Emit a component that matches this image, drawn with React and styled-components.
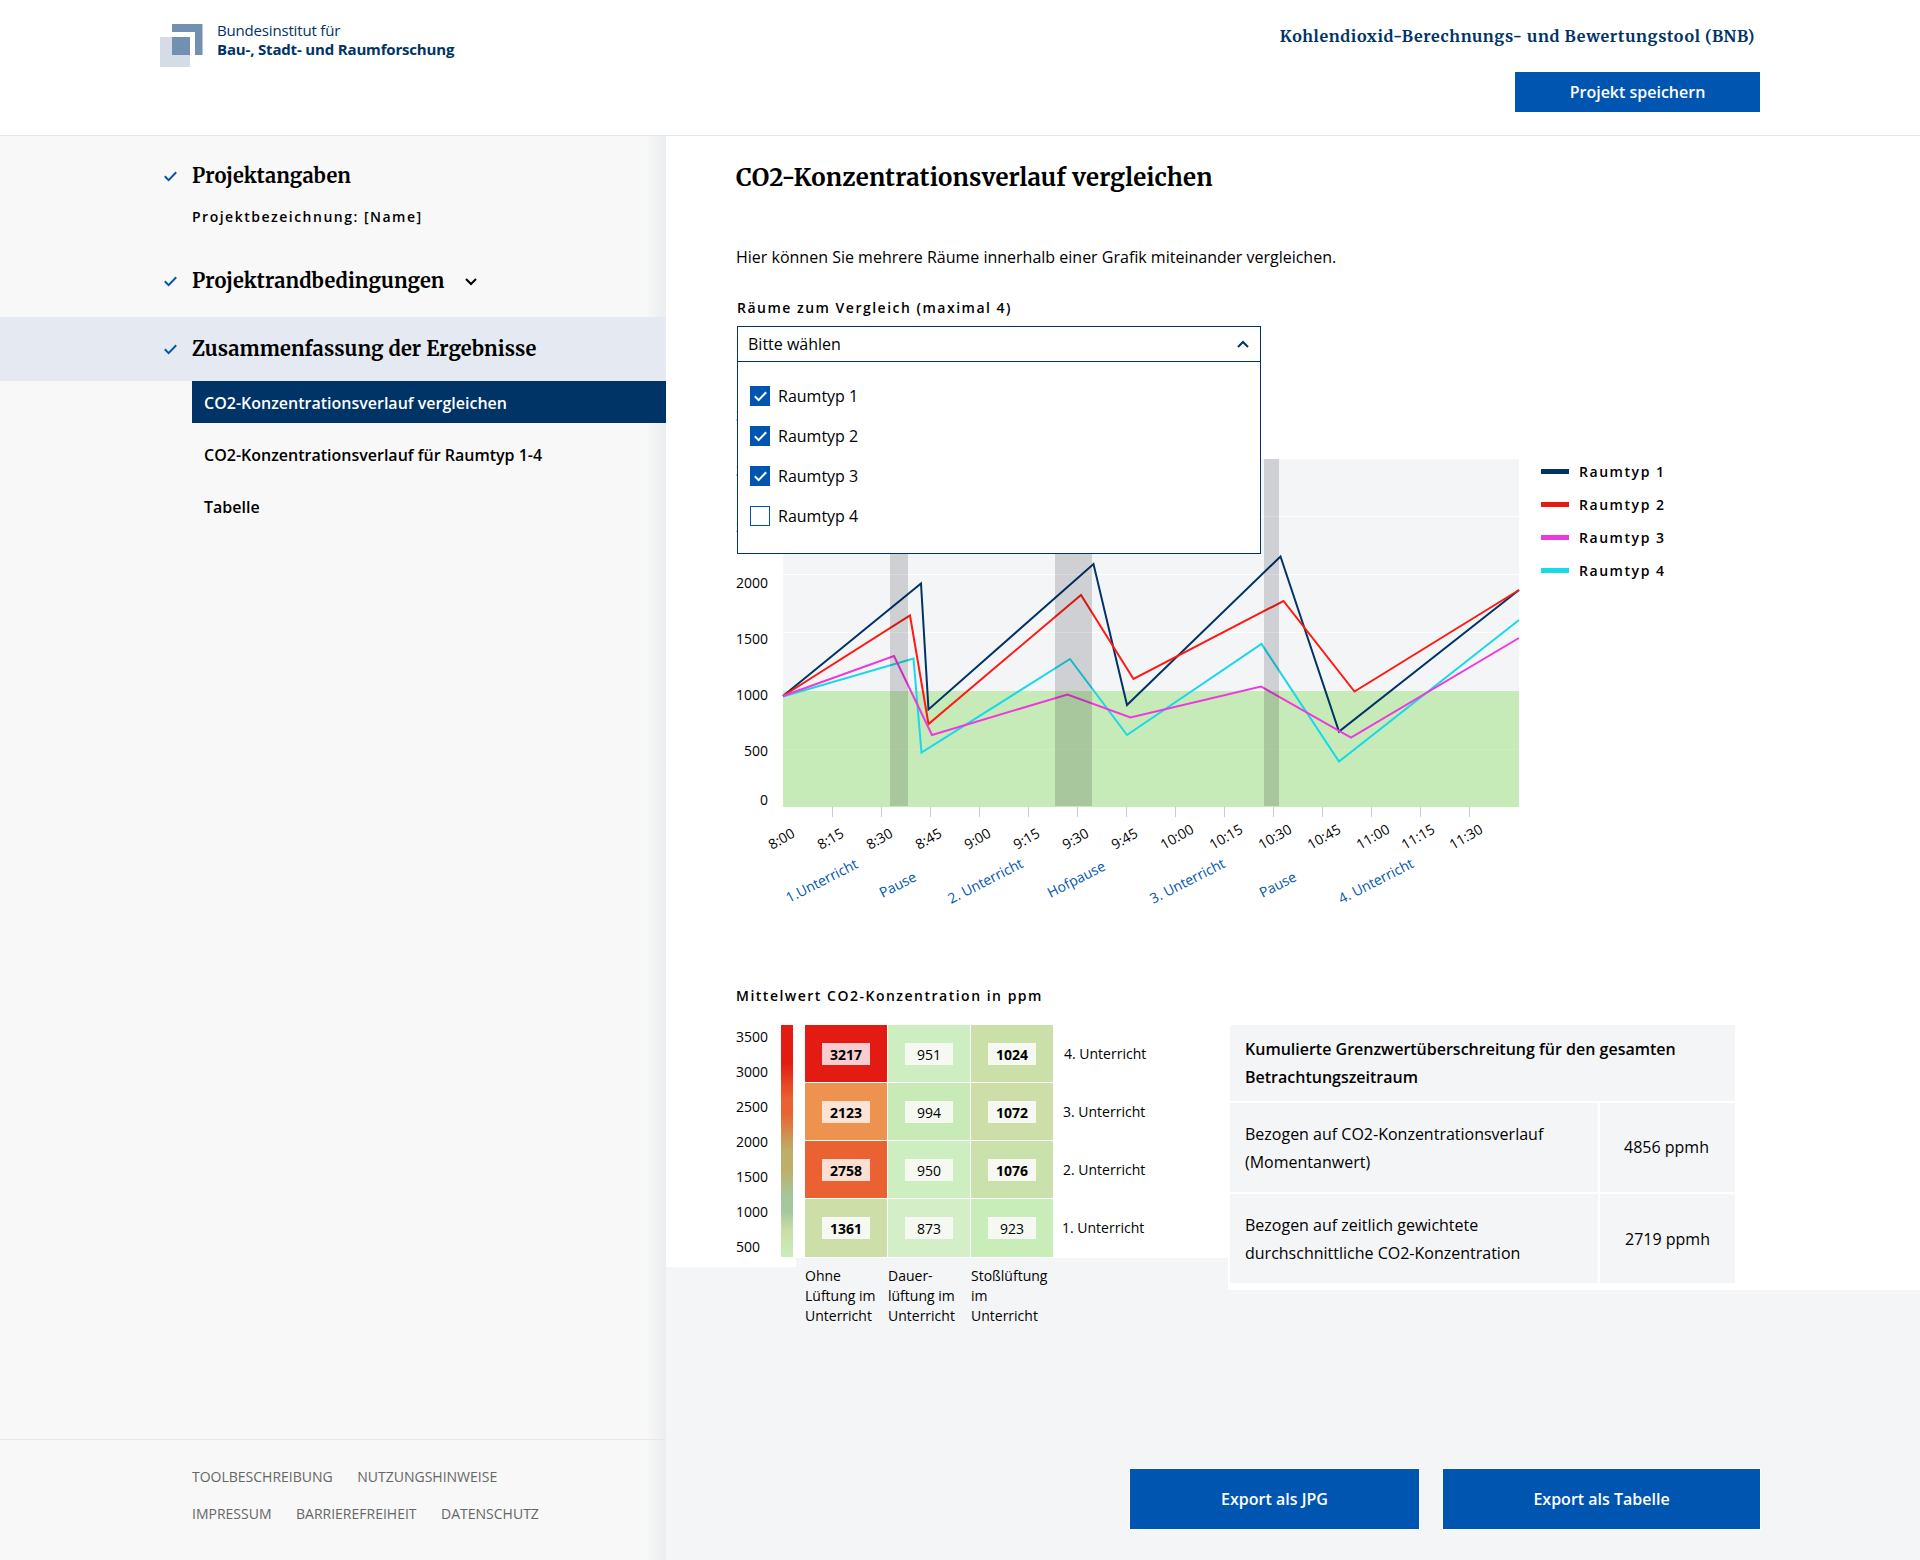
import React from "react"
import styled, { createGlobalStyle, css } from "styled-components"

const navy = "#003366"
const blue = "#0055b0"
const lightGrey = "#f4f5f7"

const GlobalStyle = createGlobalStyle`
  * {
    box-sizing: border-box;
  }
  body {
    margin: 0;
    background: #fff;
    color: #000;
    font-family: "Open Sans", "Noto Sans", sans-serif;
    font-size: 16px;
  }
`

const serif = css`
  font-family: "Merriweather", "DejaVu Serif Condensed", "DejaVu Serif", serif;
  font-weight: bold;
`

const Page = styled.div`
  display: flex;
  flex-direction: column;
  width: 1920px;
  height: 1560px;
  overflow: hidden;
`

/* header */
const Header = styled.header`
  display: flex;
  justify-content: space-between;
  height: 136px;
  padding: 20px 160px 0;
  border-bottom: 1px solid #e3e7ee;
`

const Brand = styled.div`
  display: flex;
  gap: 14px;

  svg {
    margin-top: 4px;
  }
`

const BrandText = styled.div`
  margin-top: 1px;
  color: ${navy};
  font-size: 15px;
  line-height: 19px;
  letter-spacing: -0.17px;
  white-space: nowrap;
`

const BrandLine = styled.div`
  font-weight: ${p => (p.$bold ? 700 : 400)};
`

const HeaderRight = styled.div`
  display: flex;
  flex-direction: column;
  align-items: flex-end;
`

const ToolName = styled.div`
  ${serif}
  margin: 4px 5px 0 0;
  height: 48px;
  color: ${navy};
  font-size: 16px;
  line-height: 24px;
  letter-spacing: 0.69px;
  white-space: nowrap;
`

const Button = styled.button`
  width: ${p => p.$width}px;
  height: ${p => p.$height || 40}px;
  padding: 0;
  border: 0;
  background: ${blue};
  color: #fff;
  font-family: inherit;
  font-size: 16px;
  font-weight: 600;
`

/* sidebar */
const Body = styled.div`
  display: flex;
  flex: 1;
`

const Sidebar = styled.aside`
  display: flex;
  flex-direction: column;
  width: 666px;
  padding-top: 26px;
  background: linear-gradient(to left, #ebedef, #edeff1 5px, #f8f8f8 20px);
`

const NavHead = styled.div`
  ${serif}
  display: flex;
  align-items: center;
  height: ${p => (p.$active ? 64 : 28)}px;
  margin-bottom: ${p => p.$gap || 0}px;
  padding: 0 0 1px 164px;
  background: ${p => (p.$active ? "#e5eaf2" : "transparent")};
  font-size: 20px;
  letter-spacing: 0.12px;
  white-space: nowrap;

  .check {
    margin: 2px 15px 0 0;
  }
  .chevron {
    margin: 1px 0 0 21px;
  }
`

const NavInfo = styled.div`
  margin: 0 0 40px 192px;
  font-size: 14px;
  font-weight: 600;
  line-height: 20px;
  letter-spacing: 1.5px;
`

const SubItem = styled.div`
  height: 42px;
  margin: 0 0 10px 192px;
  padding-left: 12px;
  background: ${p => (p.$active ? navy : "transparent")};
  color: ${p => (p.$active ? "#fff" : "#000")};
  font-weight: 600;
  line-height: 45px;
`

const Footer = styled.footer`
  height: 121px;
  margin-top: auto;
  padding: 27px 0 0 192px;
  border-top: 1px solid #e8e8e8;
  color: #666;
  font-size: 14px;
`

const FooterRow = styled.div`
  display: flex;
  gap: 24.5px;
  height: 37px;
  line-height: 20px;
`

/* main column */
const Main = styled.main`
  display: flex;
  flex: 1;
  flex-direction: column;
  background: ${lightGrey};
`

const Compare = styled.section`
  height: 870px;
  padding: 26px 160px 0 70px;
  background: #fff;
`

const Title = styled.h1`
  ${serif}
  margin: 0 0 51px;
  font-size: 24px;
  line-height: 32px;
  letter-spacing: 0.22px;
  white-space: nowrap;
`

const Intro = styled.p`
  margin: 0 0 29px;
  line-height: 24px;
`

const Label = styled.div`
  padding-left: ${p => p.$inset || 0}px;
  font-size: 14px;
  font-weight: 600;
  line-height: 20px;
  letter-spacing: 1.5px;
`

const Select = styled.div`
  position: relative;
  display: flex;
  align-items: center;
  justify-content: space-between;
  width: 524px;
  height: 36px;
  margin: 8px 0 38px 1px;
  padding: 0 11px 0 10px;
  border: 1px solid ${navy};
`

const Menu = styled.div`
  position: absolute;
  top: 34px;
  left: -1px;
  width: 524px;
  height: 193px;
  padding: 14px 12px;
  border: 1px solid ${navy};
  background: #fff;
`

const Option = styled.div`
  display: flex;
  align-items: center;
  gap: 8px;
  height: 40px;
`

const Checkbox = styled.span`
  display: flex;
  align-items: center;
  justify-content: center;
  width: 20px;
  height: 20px;
  border: 1px solid ${blue};
  background: ${p => (p.$checked ? blue : "#fff")};
`

const ChartRow = styled.div`
  display: flex;
  height: 530px;
  margin-bottom: 56px;

  text {
    font-size: 14px;
  }
`

const Legend = styled.div`
  padding: 55px 0 0 21px;
`

const LegendItem = styled.div`
  display: flex;
  align-items: center;
  gap: 10px;
  height: 33px;
  font-size: 14px;
  font-weight: 600;
  letter-spacing: 1.55px;

  &:before {
    content: "";
    width: 28px;
    height: 5px;
    background: ${p => p.$color};
  }
`

/* averages and limits */
const Results = styled.section`
  display: flex;
  align-items: flex-start;
  font-size: 14px;
`

const Scale = styled.div`
  display: flex;
  justify-content: space-between;
  width: 130px;
  height: 261px;
  padding: 19px 3px 0 70px;
  background: #fff;
  line-height: 35px;
`

const ScaleLabels = styled.div`
  margin-top: -6px;
`

const ScaleBar = styled.div`
  width: 12px;
  height: 232px;
  background: linear-gradient(
    #e31b12 0 16%,
    #ea6231 32%,
    #ea6231 38%,
    #bdae68 54%,
    #bdae68 62%,
    #a5c79b 74%,
    #a5c79b 80%,
    #cbdfa8 89%,
    #c8eebb
  );
`

const Heat = styled.div`
  width: 432px;
  height: 252px;
  padding: 19px 0 0 9px;
  background: #fff;
`

const HeatGrid = styled.div`
  display: grid;
  grid-template-columns: 82px 82px 82px 94px;
  grid-template-rows: 57px 57px 57px 58px;
  gap: 1px;
`

const HeatCell = styled.div`
  display: flex;
  align-items: center;
  justify-content: center;
  background: ${p => p.$color};
`

const Chip = styled.span`
  width: 48px;
  height: 22px;
  background: ${p => p.$color || "#f5f9f1"};
  font-weight: ${p => (p.$bold ? 700 : 400)};
  line-height: 23px;
  text-align: center;
`

const RowLabel = styled.div`
  padding-left: ${p => p.$indent}px;
  line-height: 57px;
  white-space: nowrap;
`

const ColumnLabel = styled.div`
  padding-top: 8px;
  line-height: 20px;
  white-space: pre;
`

const Limits = styled.div`
  flex: 1;
  height: 284px;
  padding: 19px 0 0 2px;
  background: #fff;
`

const LimitGrid = styled.div`
  display: grid;
  grid-template-columns: 368px 135px;
  grid-template-rows: 76px 89px 89px;
  gap: 2px;
  font-size: 16px;
  line-height: 28px;
`

const LimitCell = styled.div`
  display: flex;
  align-items: center;
  grid-column: ${p => (p.$head ? "1 / 3" : "auto")};
  justify-content: ${p => (p.$value ? "center" : "flex-start")};
  padding: ${p => (p.$value ? "0 2px 2px 0" : "0 15px")};
  background: ${lightGrey};
  font-weight: ${p => (p.$head ? 600 : 400)};
  white-space: pre;

  &:last-child {
    padding: 0;
  }
`

const Actions = styled.div`
  display: flex;
  justify-content: flex-end;
  gap: 24px;
  margin-top: auto;
  padding: 0 160px 31px 0;

  button {
    box-shadow: 0 0 0 1px #fff;
  }
`

const rooms = [
  {
    name: "Raumtyp 4",
    color: "#18d8e9",
    points:
      "0,237.5 130.5,199.5 138.5,293.5 287,200 344,276 478.5,185 556,302.5 736,161"
  },
  {
    name: "Raumtyp 1",
    color: navy,
    points:
      "0,237 138,124.5 145.5,250.5 310.5,105 344,246 497.5,97.5 556,272.5 736,131"
  },
  {
    name: "Raumtyp 2",
    color: "#ff1912",
    points:
      "0,237 127,156.5 145.5,265 298,136 350.5,220 500.5,142 571.5,232.5 736,131"
  },
  {
    name: "Raumtyp 3",
    color: "#ee39dc",
    points:
      "0,237 111,197 149,276 284.5,235.5 347.5,258.5 478,227.5 568,278.5 736,179"
  }
]

const legend = [
  ["Raumtyp 1", navy],
  ["Raumtyp 2", "#e8190f"],
  ["Raumtyp 3", "#ee39dc"],
  ["Raumtyp 4", "#18d8e9"]
]

const yLabels = [
  ["3500", -38],
  ["3000", 17],
  ["2500", 73],
  ["2000", 129],
  ["1500", 185],
  ["1000", 241],
  ["500", 297],
  ["0", 346]
]

const times = [
  ["8:00", -11],
  ["8:15", 38],
  ["8:30", 87],
  ["8:45", 136],
  ["9:00", 185],
  ["9:15", 234],
  ["9:30", 283],
  ["9:45", 332],
  ["10:00", 381],
  ["10:15", 430],
  ["10:30", 479],
  ["10:45", 528],
  ["11:00", 577],
  ["11:15", 622],
  ["11:30", 670]
]

const lessons = [
  ["1.Unterricht", 6, 444],
  ["Pause", 99.5, 439],
  ["2. Unterricht", 168, 445],
  ["Hofpause", 267.5, 439],
  ["3. Unterricht", 370, 445],
  ["Pause", 479.5, 439],
  ["4. Unterricht", 558.5, 445]
]

const breaks = [
  [107, 18],
  [272, 37],
  [481, 15]
]

const heat = [
  ["4. Unterricht", 10, ["3217", "#e31b12", "#f9cdd0"], ["951", "#cdeec0"], ["1024", "#cbdfa8"]],
  ["3. Unterricht", 9, ["2123", "#ee924f", "#fbe3d6"], ["994", "#c7eab6"], ["1072", "#cddea8"]],
  ["2. Unterricht", 9, ["2758", "#ea6231", "#fbdfd3"], ["950", "#cdeec0"], ["1076", "#cbe1ac"]],
  ["1. Unterricht", 8, ["1361", "#cddea8"], ["873", "#d4efc8"], ["923", "#c9edb9"]]
]

const Logo = () => (
  <svg width="43" height="43" viewBox="0 0 43 43">
    <path d="M0 13h30v30H0z" fill="#d5dce5" />
    <path d="M12 13h18v18H12zM12 0h30.5v31H35V8H12z" fill="#7291b1" />
  </svg>
)

const Check = ({ color = blue, className }) => (
  <svg className={className} width="13" height="11" viewBox="0 0 13 11">
    <path d="M0.8 5.2l3.8 3.9L12.2 1.2" fill="none" stroke={color} strokeWidth="2" />
  </svg>
)

const Chevron = ({ up, color = "#000", className }) => (
  <svg className={className} width="12" height="9" viewBox="0 0 12 9">
    <path
      d={up ? "M1 7l5-5 5 5" : "M1 2l5 5 5-5"}
      fill="none"
      stroke={color}
      strokeWidth="2"
    />
  </svg>
)

const Chart = () => (
  <svg width="784" height="530" viewBox="-47 -59 784 530">
    <rect width="736" height="348" fill={lightGrey} />
    {[57, 115, 173].map(y => (
      <rect key={y} y={y} width="736" height="1" fill="#fff" />
    ))}
    <rect y="232" width="736" height="116" fill="#c6eab8" />
    <rect y="290" width="736" height="1" fill="#cdecc0" />
    {rooms.map(room => (
      <polyline
        key={room.name}
        points={room.points}
        fill="none"
        stroke={room.color}
        strokeWidth="2"
      />
    ))}
    {breaks.map(([x, width]) => (
      <rect key={x} x={x} width={width} height="347" fill="#000008" opacity="0.15" />
    ))}
    {yLabels.map(([label, y]) => (
      <text key={label} x="-15" y={y} textAnchor="end">
        {label}
      </text>
    ))}
    {times.slice(1).map(([label], i) => (
      <rect key={label} x={49 * (i + 1)} y="348" width="1" height="10" fill="#cbcbd0" />
    ))}
    {times.map(([label, x]) => (
      <text key={label} transform={`translate(${x} 391) rotate(-30)`}>
        {label}
      </text>
    ))}
    {lessons.map(([label, x, y]) => (
      <text key={x} transform={`translate(${x} ${y}) rotate(-27)`} fill={blue}>
        {label}
      </text>
    ))}
  </svg>
)

const RoomSelect = () => (
  <Select>
    <span>Bitte wählen</span>
    <Chevron up color={navy} />
    <Menu>
      {[1, 2, 3, 4].map(n => (
        <Option key={n}>
          <Checkbox $checked={n < 4}>{n < 4 && <Check color="#fff" />}</Checkbox>
          Raumtyp {n}
        </Option>
      ))}
    </Menu>
  </Select>
)

const HeatMap = () => (
  <Heat>
    <HeatGrid>
      {heat.map(([lesson, indent, ...cells]) => (
        <React.Fragment key={lesson}>
          {cells.map(([value, color, chip]) => (
            <HeatCell key={value} $color={color}>
              <Chip $color={chip} $bold={Number(value) > 1000}>
                {value}
              </Chip>
            </HeatCell>
          ))}
          <RowLabel $indent={indent}>{lesson}</RowLabel>
        </React.Fragment>
      ))}
      <ColumnLabel>{"Ohne\nLüftung im\nUnterricht"}</ColumnLabel>
      <ColumnLabel>{"Dauer-\nlüftung im\nUnterricht"}</ColumnLabel>
      <ColumnLabel>{"Stoßlüftung\nim\nUnterricht"}</ColumnLabel>
    </HeatGrid>
  </Heat>
)

const App = () => (
  <Page>
    <GlobalStyle />
    <Header>
      <Brand>
        <Logo />
        <BrandText>
          <BrandLine>Bundesinstitut für</BrandLine>
          <BrandLine $bold>Bau-, Stadt- und Raumforschung</BrandLine>
        </BrandText>
      </Brand>
      <HeaderRight>
        <ToolName>Kohlendioxid-Berechnungs- und Bewertungstool (BNB)</ToolName>
        <Button $width={245}>Projekt speichern</Button>
      </HeaderRight>
    </Header>
    <Body>
      <Sidebar>
        <NavHead $gap={17}>
          <Check className="check" />
          Projektangaben
        </NavHead>
        <NavInfo>Projektbezeichnung: [Name]</NavInfo>
        <NavHead $gap={22}>
          <Check className="check" />
          Projektrandbedingungen
          <Chevron className="chevron" />
        </NavHead>
        <NavHead $active>
          <Check className="check" />
          Zusammenfassung der Ergebnisse
        </NavHead>
        <SubItem $active>CO2-Konzentrationsverlauf vergleichen</SubItem>
        <SubItem>CO2-Konzentrationsverlauf für Raumtyp 1-4</SubItem>
        <SubItem>Tabelle</SubItem>
        <Footer>
          <FooterRow>
            <span>TOOLBESCHREIBUNG</span>
            <span>NUTZUNGSHINWEISE</span>
          </FooterRow>
          <FooterRow>
            <span>IMPRESSUM</span>
            <span>BARRIEREFREIHEIT</span>
            <span>DATENSCHUTZ</span>
          </FooterRow>
        </Footer>
      </Sidebar>
      <Main>
        <Compare>
          <Title>CO2-Konzentrationsverlauf vergleichen</Title>
          <Intro>
            Hier können Sie mehrere Räume innerhalb einer Grafik miteinander vergleichen.
          </Intro>
          <Label $inset={1}>Räume zum Vergleich (maximal 4)</Label>
          <RoomSelect />
          <ChartRow>
            <Chart />
            <Legend>
              {legend.map(([name, color]) => (
                <LegendItem key={name} $color={color}>
                  {name}
                </LegendItem>
              ))}
            </Legend>
          </ChartRow>
          <Label>Mittelwert CO2-Konzentration in ppm</Label>
        </Compare>
        <Results>
          <Scale>
            <ScaleLabels>
              {[3500, 3000, 2500, 2000, 1500, 1000, 500].map(n => (
                <div key={n}>{n}</div>
              ))}
            </ScaleLabels>
            <ScaleBar />
          </Scale>
          <HeatMap />
          <Limits>
            <LimitGrid>
              <LimitCell $head>
                {"Kumulierte Grenzwertüberschreitung für den gesamten\nBetrachtungszeitraum"}
              </LimitCell>
              <LimitCell>{"Bezogen auf CO2-Konzentrationsverlauf\n(Momentanwert)"}</LimitCell>
              <LimitCell $value>4856 ppmh</LimitCell>
              <LimitCell>
                {"Bezogen auf zeitlich gewichtete\ndurchschnittliche CO2-Konzentration"}
              </LimitCell>
              <LimitCell $value>2719 ppmh</LimitCell>
            </LimitGrid>
          </Limits>
        </Results>
        <Actions>
          <Button $width={289} $height={60}>
            Export als JPG
          </Button>
          <Button $width={317} $height={60}>
            Export als Tabelle
          </Button>
        </Actions>
      </Main>
    </Body>
  </Page>
)

export default App
